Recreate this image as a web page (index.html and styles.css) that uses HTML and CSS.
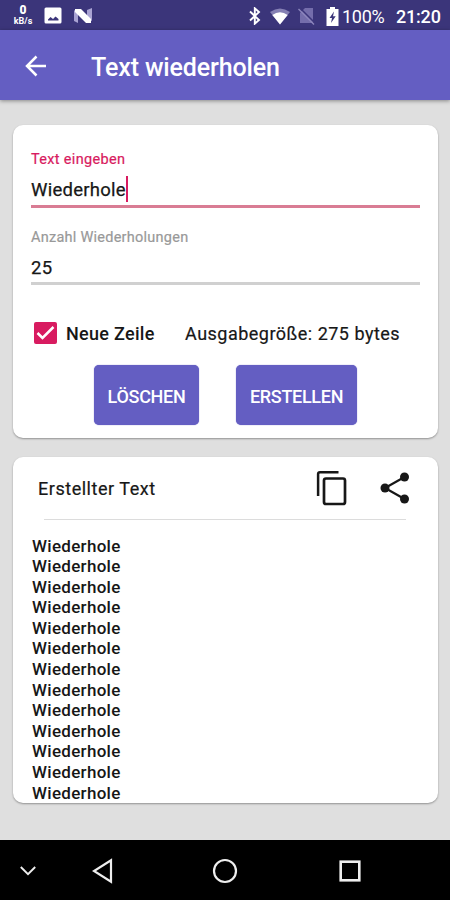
FILE: index.html
```html
<!DOCTYPE html>
<html lang="de">
<head>
<meta charset="utf-8">
<title>Text wiederholen</title>
<link rel="stylesheet" href="styles.css">
</head>
<body>
<div class="statusbar">
  <div class="speed"><b>0</b><span>kB/s</span></div>
  <svg class="photo" width="18" height="18" viewBox="0 0 18 18"><path fill="#fff" fill-rule="evenodd" d="M2 .5h14q1.500 0 1.500 1.500v13q0 1.500-1.500 1.500H2Q.5 16.500.5 15V2Q.5.5 2 .5zM4 13.500h10.500V12L11.500 9.500 9 12 6.500 10 4 12.500z"/></svg>
  <svg class="nougat" width="20" height="18" viewBox="0 0 20 18"><path fill="#a9a3d3" d="M1 3l4 3v10l-4-2zM14 3l5-2v13l-5-2z"/><path fill="#fff" d="M2 2h6l10 10v4h-5L2 5z"/></svg>
  <svg class="bt" width="12" height="18" viewBox="0 0 12 18"><path fill="none" stroke="#fff" stroke-width="1.900" d="M1 4.500l9 8.500-4.200 3.700V1.300L10 5l-9 8.500"/></svg>
  <svg class="wifi" width="20" height="17" viewBox="0 0 20 17"><path fill="#8580b4" d="M0 4Q10-3 20 4L10 16.500z"/><path fill="#fff" d="M2.300 7Q10 1.500 17.700 7L10 16.500z"/></svg>
  <svg class="sim" width="17" height="18" viewBox="0 0 17 18"><path fill="#746dab" d="M7 1h8v15H2V6z"/><path stroke="#3b357a" stroke-width="1.500" d="M2 1l15 15"/><path stroke="#8b85bb" stroke-width="1.400" d="M.5 2L16 17.500"/></svg>
  <svg class="battery" width="13" height="19" viewBox="0 0 13 19"><path fill="#fff" d="M4 0h5v2h3.500v17H.5V2H4z"/><path fill="#3b357a" d="M8 4.500L3.500 11h2.500L5 16l4.700-6.800H7z"/></svg>
  <span class="percent">100%</span><span class="clock">21:20</span>
</div>
<header class="appbar">
  <svg width="22" height="22" viewBox="0 0 22 22"><path fill="none" stroke="#fff" stroke-width="2.500" d="M21 11H2M11.500 1.500L2 11l9.500 9.500"/></svg>
  <h1>Text wiederholen</h1>
</header>
<main>
  <section class="card form">
    <div class="label active">Text eingeben</div>
    <div class="field focused"><span>Wiederhole</span><i class="caret"></i></div>
    <div class="label second">Anzahl Wiederholungen</div>
    <div class="field"><span class="count">25</span></div>
    <div class="options">
      <svg width="23" height="22" viewBox="0 0 23 22"><rect width="23" height="22" rx="2" fill="#d81b60"/><path fill="none" stroke="#fff" stroke-width="2.500" d="M3.500 11l5 5L19.500 5"/></svg>
      <span class="newline">Neue Zeile</span><span class="size">Ausgabegröße: 275 bytes</span>
    </div>
    <div class="buttons"><button class="clear"><span>LÖSCHEN</span></button><button class="create"><span>ERSTELLEN</span></button></div>
  </section>
  <section class="card result">
    <div class="head">
      <h2>Erstellter Text</h2>
      <svg class="copy" width="31" height="36" viewBox="0 0 31 36"><path fill="none" stroke="#171717" stroke-width="2.500" d="M2.100 26V4q0-1.800 1.800-1.800H22.500"/><rect x="8" y="8.500" width="21" height="25.500" rx="2" fill="none" stroke="#171717" stroke-width="2.700"/></svg>
      <svg class="share" width="30" height="32" viewBox="0 0 30 32"><path fill="none" stroke="#171717" stroke-width="2.200" d="M24.500 5L5 16l19.500 11"/><g fill="#171717"><circle cx="24.500" cy="5" r="4.500"/><circle cx="5" cy="16" r="4.500"/><circle cx="24.500" cy="27" r="4.500"/></g></svg>
    </div>
    <div class="output">Wiederhole<br>Wiederhole<br>Wiederhole<br>Wiederhole<br>Wiederhole<br>Wiederhole<br>Wiederhole<br>Wiederhole<br>Wiederhole<br>Wiederhole<br>Wiederhole<br>Wiederhole<br>Wiederhole</div>
  </section>
</main>
<nav>
  <svg class="down" width="16" height="10" viewBox="0 0 16 10"><path fill="none" stroke="#eee" stroke-width="1.900" d="M.8 1L8 8.200 15.200 1"/></svg>
  <svg class="back" width="21" height="26" viewBox="0 0 21 26"><path fill="none" stroke="#eee" stroke-width="2.200" d="M19 2.300v21.400L2 13z"/></svg>
  <svg class="home" width="26" height="26" viewBox="0 0 26 26"><circle cx="13" cy="13" r="11" fill="none" stroke="#eee" stroke-width="2.200"/></svg>
  <svg class="recent" width="22" height="22" viewBox="0 0 22 22"><rect x="1.700" y="1.700" width="18.600" height="18.600" fill="none" stroke="#eee" stroke-width="2.600"/></svg>
</nav>
</body>
</html>
```
FILE: styles.css
```css
* { box-sizing: border-box; }
body { margin: 0; width: 450px; height: 900px; display: flex; flex-direction: column; overflow: hidden; background: #dfdfdf; font-family: Roboto, sans-serif; color: #171717; }
svg { display: block; flex: none; }
span { white-space: nowrap; }
.statusbar { height: 30px; flex: none; background: #3b357a; display: flex; align-items: center; color: #fff; padding-left: 13px; padding-top: 2px; }
.speed { width: 20px; display: flex; flex-direction: column; align-items: center; font-size: 9px; font-weight: 700; }
.speed b { font-size: 12px; line-height: 14px; margin-top: -2px; margin-bottom: -1px; }
.speed span { line-height: 11px; }
.photo { margin-left: 11px; }
.nougat { margin-left: 11px; }
.bt { margin-left: 156px; }
.wifi { margin-left: 9px; }
.sim { margin-left: 8px; }
.battery { margin-left: 11px; }
.percent { width: 41px; margin-left: 3px; font-size: 18px; letter-spacing: -.25px; }
.clock { margin-left: 13px; font-size: 18px; font-weight: 500; letter-spacing: -.2px; }
.appbar { height: 70px; flex: none; background: #645ec2; display: flex; align-items: center; padding-left: 25px; color: #fff; box-shadow: 0 1px 4px rgba(0,0,0,.4); }
.appbar svg { margin-top: 1px; }
h1 { margin: 4px 0 0 44px; font-size: 25px; font-weight: 500; white-space: nowrap; letter-spacing: -.13px; }
main { flex: 1; padding: 25px 12px 0 13px; display: flex; flex-direction: column; gap: 19px; }
.card { background: #fff; border-radius: 10px; box-shadow: 0 1px 2px rgba(0,0,0,.35); flex: none; }
.form { height: 313px; padding: 25px 18px 0; }
.label { height: 20px; line-height: 20px; font-size: 14.500px; color: #999; letter-spacing: .25px; -webkit-text-stroke: .2px currentColor; }
.label.active { color: #d81b60; letter-spacing: .32px; }
.second { margin-top: 20px; }
.field { height: 37px; border-bottom: 3px solid #d0d0d0; display: flex; align-items: center; font-size: 18.500px; padding-top: 6px; letter-spacing: .25px; -webkit-text-stroke: .25px currentColor; }
.field.focused { height: 38px; border-color: #d97c94; padding-top: 4px; }
.field span { line-height: 24px; }
.caret { width: 2px; height: 26px; margin-top: -2px; background: #d81b60; }
.options { display: flex; align-items: center; height: 24px; margin-top: 36px; padding-left: 3px; font-size: 18px; }
.newline { margin-left: 9px; width: 90px; font-weight: 500; letter-spacing: .3px; }
.size { margin-left: 29px; letter-spacing: .49px; -webkit-text-stroke: .2px currentColor; }
.buttons { display: flex; padding-left: 63px; margin-top: 20px; gap: 37px; }
button { height: 60px; border: 0; border-radius: 5px; background: #645ec2; color: #fff; font: 500 18px Roboto, sans-serif; padding: 2px 0 0; box-shadow: 0 0 1px #645ec2; letter-spacing: -.3px; }
.clear { width: 105px; }
.create { width: 121px; }
.result { height: 346px; overflow: hidden; }
.head { height: 63px; margin-left: 25px; width: 368px; display: flex; align-items: center; position: relative; }
.head::after { content: ""; position: absolute; left: 6px; right: 0; bottom: 0; height: 1px; background: #dcdcdc; }
h2 { margin: 0; font-size: 18px; font-weight: 400; width: 278px; flex: none; letter-spacing: .53px; -webkit-text-stroke: .2px currentColor; }
.copy { margin-top: -1px; }
.share { margin-left: 33px; margin-top: -1px; }
.output { margin: 15.500px 0 0 19px; font-size: 17px; font-weight: 500; line-height: 20.600px; letter-spacing: .3px; }
nav { height: 60px; flex: none; background: #000; display: flex; align-items: center; padding-left: 20px; padding-top: 1px; }
.back { margin-left: 56px; }
.home { margin-left: 99px; }
.recent { margin-left: 101px; }
```
